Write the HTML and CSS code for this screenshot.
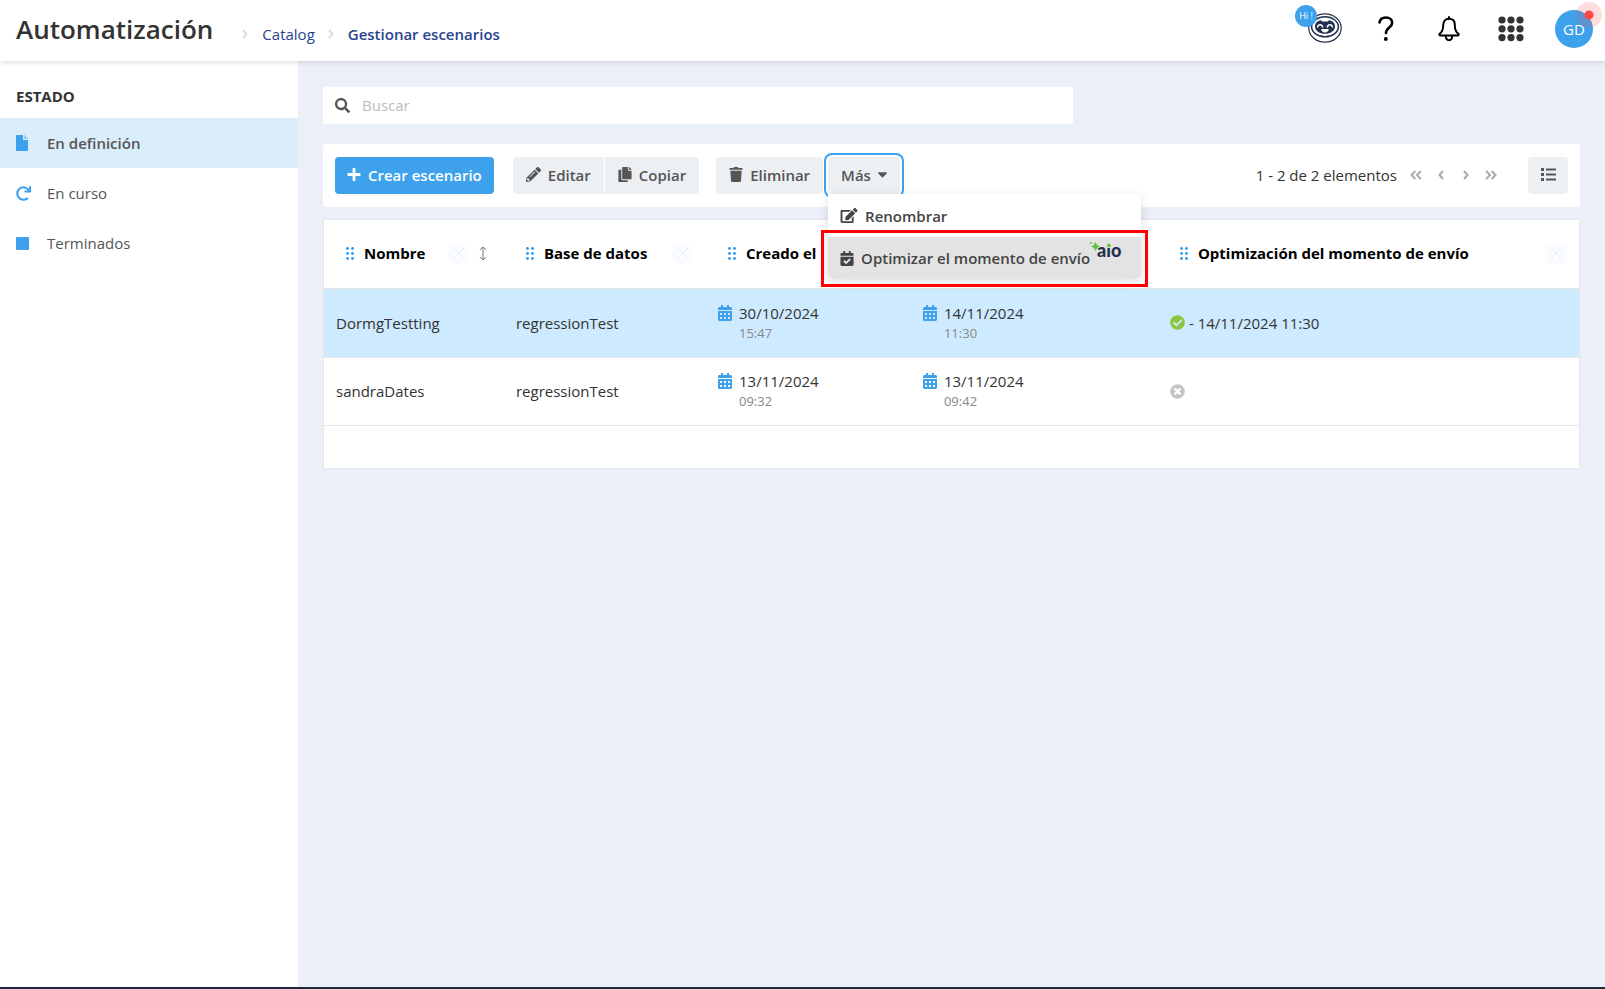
FILE: index.html
```html
<!DOCTYPE html>
<html lang="es">
<head>
<meta charset="utf-8">
<meta name="viewport" content="width=device-width, initial-scale=1">
<title>Automatización</title>
<link rel="stylesheet" href="styles.css">
</head>
<body>
<svg class="sprite" aria-hidden="true">
  <symbol id="i-file" viewBox="0 0 384 512"><path d="M224 136V0H24C10.700 0 0 10.700 0 24v464c0 13.300 10.700 24 24 24h336c13.300 0 24-10.700 24-24V160H248c-13.200 0-24-10.800-24-24z"/><path opacity=".45" d="M384 122v6H256V0h6c6.400 0 12.500 2.500 17 7l98 98c4.500 4.500 7 10.600 7 17z"/></symbol>
  <symbol id="i-redo" viewBox="0 0 512 512"><path d="M500 8h-47c-7 0-12.300 5.600-12 12.500l4 82.800A247 247 0 0 0 256 8C119 8 8 119.300 8 256.200 8 393.200 119.100 504 256 504c63.900 0 122.200-24.200 166.200-63.900 5.100-4.600 5.300-12.500.5-17.400l-34-34c-4.500-4.500-11.700-4.700-16.400-.5A176 176 0 1 1 402 157.800l-101.500-4.900c-6.900-.3-12.500 5.100-12.500 12v47.100c0 6.600 5.400 12 12 12h200c6.600 0 12-5.400 12-12V20c0-6.600-5.400-12-12-12z"/></symbol>
  <symbol id="i-search" viewBox="0 0 512 512"><path d="M505 442.700 405.300 343c-4.500-4.500-10.600-7-17-7H372c27.600-35.300 44-79.700 44-128C416 93.100 322.900 0 208 0S0 93.100 0 208s93.100 208 208 208c48.300 0 92.700-16.400 128-44v16.300c0 6.400 2.500 12.500 7 17l99.700 99.700c9.400 9.400 24.600 9.400 33.900 0l28.300-28.300c9.400-9.400 9.400-24.600.1-34zM208 336a128 128 0 1 1 0-256 128 128 0 0 1 0 256z"/></symbol>
  <symbol id="i-plus" viewBox="0 0 448 512"><path d="M416 208H272V64c0-17.700-14.300-32-32-32h-32c-17.700 0-32 14.300-32 32v144H32c-17.700 0-32 14.300-32 32v32c0 17.700 14.300 32 32 32h144v144c0 17.700 14.300 32 32 32h32c17.700 0 32-14.300 32-32V304h144c17.700 0 32-14.300 32-32v-32c0-17.700-14.300-32-32-32z"/></symbol>
  <symbol id="i-pencil" viewBox="0 0 512 512"><path d="M498 142l-46.600 46.600c-4.700 4.700-12.300 4.700-17 0L323.500 77.500c-4.700-4.700-4.700-12.300 0-17L370 14c18.700-18.700 49.100-18.700 67.900 0l60.100 60.100c18.800 18.700 18.800 49.100 0 67.900zm-214.200-41.900L21.500 362.400.300 483.900c-2.900 16.400 11.400 30.600 27.800 27.800l121.500-21.300 262.300-262.300c4.700-4.700 4.700-12.300 0-17L300.800 100c-4.800-4.700-12.400-4.700-17 .1zM124.100 339.900c-5.500-5.500-5.500-14.300 0-19.800l154-154c5.500-5.500 14.300-5.500 19.800 0s5.500 14.300 0 19.800l-154 154c-5.500 5.500-14.300 5.500-19.800 0zM88 424h48v36.300l-64.500 11.300-31.100-31.100L51.700 376H88v48z"/></symbol>
  <symbol id="i-copy" viewBox="0 0 448 512"><path d="M320 448v40c0 13.300-10.700 24-24 24H24c-13.300 0-24-10.700-24-24V120c0-13.300 10.700-24 24-24h72v296c0 30.900 25.100 56 56 56h168zm0-344V0H152c-13.300 0-24 10.700-24 24v368c0 13.300 10.700 24 24 24h272c13.300 0 24-10.700 24-24V128H344c-13.200 0-24-10.800-24-24zm121-31L375 7c-4.500-4.500-10.600-7-17-7h-6v96h96v-6c0-6.400-2.500-12.500-7-17z"/></symbol>
  <symbol id="i-trash" viewBox="0 0 448 512"><path d="M432 32H312l-9.400-18.700A24 24 0 0 0 281.100 0H166.800a23.700 23.700 0 0 0-21.400 13.300L136 32H16A16 16 0 0 0 0 48v32a16 16 0 0 0 16 16h416a16 16 0 0 0 16-16V48a16 16 0 0 0-16-16zM53.200 467a48 48 0 0 0 47.900 45h245.800a48 48 0 0 0 47.900-45L416 128H32z"/></symbol>
  <symbol id="i-caret" viewBox="0 0 10 6"><path d="M.8 0h8.400c.7 0 1 .8.500 1.300L5.600 5.500c-.3.300-.9.300-1.200 0L.3 1.300C-.2.800.100 0 .8 0z"/></symbol>
  <symbol id="i-edit" viewBox="0 0 576 512"><path d="M402.600 83.200l90.200 90.200c3.800 3.800 3.800 10 0 13.800L274.400 405.600l-92.800 10.300c-12.400 1.400-22.900-9.100-21.500-21.500l10.300-92.800L388.800 83.200c3.800-3.800 10-3.800 13.800 0zm162-22.900l-48.800-48.800c-15.200-15.200-39.900-15.200-55.200 0l-35.400 35.400c-3.800 3.800-3.800 10 0 13.800l90.200 90.200c3.800 3.800 10 3.800 13.800 0l35.400-35.400c15.200-15.300 15.200-40 0-55.200zM384 346.200V448H64V128h229.800c3.200 0 6.200-1.300 8.500-3.500l40-40c7.600-7.600 2.200-20.500-8.500-20.500H48C21.500 64 0 85.500 0 112v352c0 26.500 21.500 48 48 48h352c26.500 0 48-21.500 48-48V306.200c0-10.700-12.900-16-20.500-8.500l-40 40c-2.200 2.300-3.500 5.300-3.500 8.500z"/></symbol>
  <symbol id="i-calcheck" viewBox="0 0 448 512"><path d="M436 160H12c-6.600 0-12-5.400-12-12v-36c0-26.500 21.500-48 48-48h48V12c0-6.600 5.400-12 12-12h40c6.600 0 12 5.400 12 12v52h128V12c0-6.600 5.400-12 12-12h40c6.600 0 12 5.400 12 12v52h48c26.500 0 48 21.500 48 48v36c0 6.600-5.400 12-12 12zM12 192h424c6.600 0 12 5.400 12 12v260c0 26.500-21.500 48-48 48H48c-26.500 0-48-21.500-48-48V204c0-6.600 5.400-12 12-12zm333.300 95.900l-28.200-28.400c-4.700-4.700-12.300-4.700-17 0L194.100 364.700l-46-46.400c-4.700-4.700-12.300-4.700-17-.1l-28.400 28.200c-4.700 4.700-4.700 12.300 0 17l82.600 83.300c4.700 4.700 12.300 4.700 17 .1l143-141.800c4.700-4.800 4.700-12.400 0-17.100z"/></symbol>
  <symbol id="i-calendar" viewBox="0 0 14 16"><path d="M3 0h2v2h4V0h2v2h1.500C13.300 2 14 2.700 14 3.500V5H0V3.500C0 2.700.7 2 1.500 2H3z"/><path fill-rule="evenodd" d="M0 6h14v8.500c0 .8-.7 1.500-1.500 1.500h-11C.7 16 0 15.300 0 14.500zM2 8v2h2V8zm4 0v2h2V8zm4 0v2h2V8zM2 12v2h2v-2zm4 0v2h2v-2zm4 0v2h2v-2z"/></symbol>
  <symbol id="i-list" viewBox="0 0 15 13"><path d="M0 0h3v3H0zM0 5h3v3H0zM0 10h3v3H0zM5 .5h10v2H5zM5 5.500h10v2H5zM5 10.500h10v2H5z"/></symbol>
  <symbol id="i-left" viewBox="0 0 6 10"><path class="line" d="M5 1 1.500 5 5 9"/></symbol>
  <symbol id="i-right" viewBox="0 0 6 10"><path class="line" d="M1 1l3.500 4L1 9"/></symbol>
  <symbol id="i-dleft" viewBox="0 0 12 10"><path class="line" d="M5.300 1 1.500 5l3.800 4M10.800 1 7 5l3.800 4"/></symbol>
  <symbol id="i-dright" viewBox="0 0 12 10"><path class="line" d="M1.200 1 5 5 1.200 9M6.700 1l3.800 4-3.800 4"/></symbol>
  <symbol id="i-grip" viewBox="0 0 8 13"><circle cx="1.500" cy="1.500" r="1.400"/><circle cx="6.500" cy="1.500" r="1.400"/><circle cx="1.500" cy="6.500" r="1.400"/><circle cx="6.500" cy="6.500" r="1.400"/><circle cx="1.500" cy="11.500" r="1.400"/><circle cx="6.500" cy="11.500" r="1.400"/></symbol>
  <symbol id="i-x" viewBox="0 0 12 12"><path d="M1 1l10 10M11 1 1 11"/></symbol>
  <symbol id="i-sort" viewBox="0 0 8 15"><path class="thin" d="M4 1v13M.8 4 4 1l3.200 3M.8 11 4 14l3.200-3"/></symbol>
  <symbol id="i-ok" viewBox="0 0 512 512"><path d="M504 256a248 248 0 1 1-496 0 248 248 0 0 1 496 0zM227.300 387.300l184-184c6.200-6.200 6.200-16.400 0-22.600l-22.600-22.600c-6.200-6.200-16.400-6.200-22.600 0L216 308.100l-70.100-70.100c-6.200-6.200-16.400-6.200-22.600 0l-22.600 22.600c-6.200 6.200-6.200 16.400 0 22.600l104 104c6.200 6.300 16.400 6.300 22.600.1z"/></symbol>
  <symbol id="i-no" viewBox="0 0 512 512"><path d="M256 8a248 248 0 1 0 0 496 248 248 0 0 0 0-496zm121.600 313.100c4.700 4.700 4.700 12.300 0 17L338 377.600c-4.700 4.700-12.300 4.700-17 0L256 312l-65.100 65.600c-4.700 4.700-12.300 4.700-17 0L134.400 338c-4.700-4.700-4.700-12.300 0-17l65.600-65-65.600-65.100c-4.700-4.700-4.700-12.300 0-17l39.600-39.600c4.700-4.700 12.300-4.700 17 0l65 65.700 65.100-65.600c4.700-4.700 12.300-4.700 17 0l39.600 39.600c4.700 4.700 4.700 12.300 0 17L312 256z"/></symbol>
</svg>

<header class="topbar">
  <h1 class="topbar-title">Automatización</h1>
  <nav class="crumbs" aria-label="Ruta">
    <svg class="ic chev" aria-hidden="true"><use href="#i-right"/></svg>
    <a href="#catalog">Catalog</a>
    <svg class="ic chev" aria-hidden="true"><use href="#i-right"/></svg>
    <a href="#escenarios" class="current">Gestionar escenarios</a>
  </nav>
  <div class="tools">
    <button type="button" class="tool robot" aria-label="Asistente">
      <svg width="34" height="30" viewBox="0 0 34 30" fill="none">
        <ellipse cx="17" cy="15" rx="16.200" ry="14.200" stroke="#22304f" stroke-width="1.200"/>
        <ellipse cx="17" cy="13.800" rx="13.400" ry="10" stroke="#22304f" stroke-width="1.500"/>
        <path d="M7 13.500c0-3.500 2.500-5.700 6-6.200l1.200 1.300h5.600L21 7.300c3.500.5 6 2.700 6 6.200 0 4.500-4.700 7.300-10 7.300s-10-2.800-10-7.300z" fill="#22304f"/>
        <path d="M9.500 14.500c.3-3.800 4.900-3.800 5.200 0M19.300 14.500c.3-3.800 4.900-3.800 5.200 0" stroke="#fff" stroke-width="1.500"/>
        <path d="M13.200 16h7.600c0 4.600-7.600 4.600-7.600 0z" fill="#fff"/>
      </svg>
      <span class="hi">Hi !</span>
    </button>
    <button type="button" class="tool help" aria-label="Ayuda">
      <svg width="16" height="26" viewBox="0 0 16 26"><path d="M1.500 6.500C2 3 4.500 1.500 8 1.500c3.700 0 6.200 2 6.200 5.200 0 4.800-6.200 4.800-6.200 10.300" fill="none" stroke="#000" stroke-width="2.600" stroke-linecap="round"/><circle cx="7.800" cy="23" r="2"/></svg>
    </button>
    <button type="button" class="tool" aria-label="Notificaciones">
      <svg width="22" height="26" viewBox="0 0 22 26" fill="none" stroke="#000" stroke-width="2" stroke-linejoin="round"><path d="M11 2.800c3.800 0 5.800 2.600 5.800 6.200 0 5.200 1.200 7.200 3.600 8.800.6.500.4 1.600-.5 1.600H2.100c-.9 0-1.100-1.100-.5-1.600C4 16.200 5.200 14.200 5.200 9c0-3.600 2-6.200 5.800-6.200z"/><path d="M11 2.800V1M7.800 20c0 5.500 6.400 5.500 6.400 0" stroke-linecap="round"/></svg>
    </button>
    <button type="button" class="tool" aria-label="Aplicaciones">
      <svg width="26" height="26" viewBox="0 0 26 26" fill="#333"><circle cx="4" cy="4" r="3.600"/><circle cx="13" cy="4" r="3.600"/><circle cx="22" cy="4" r="3.600"/><circle cx="4" cy="12.800" r="3.600"/><circle cx="13" cy="12.800" r="3.600"/><circle cx="22" cy="12.800" r="3.600"/><circle cx="4" cy="21.600" r="3.600"/><circle cx="13" cy="21.600" r="3.600"/><circle cx="22" cy="21.600" r="3.600"/></svg>
    </button>
    <button type="button" class="avatar">GD<span class="pulse"></span></button>
  </div>
</header>

<div class="layout">
  <aside class="sidebar">
    <h2 class="sidebar-title">Estado</h2>
    <nav aria-label="Estado">
      <a class="side-item active" href="#definicion"><svg class="ic side-file" aria-hidden="true"><use href="#i-file"/></svg>En definición</a>
      <a class="side-item" href="#curso"><svg class="ic side-redo" aria-hidden="true"><use href="#i-redo"/></svg>En curso</a>
      <a class="side-item" href="#terminados"><span class="side-stop"></span>Terminados</a>
    </nav>
  </aside>

  <main class="main">
    <label class="search">
      <svg class="ic i15" aria-hidden="true"><use href="#i-search"/></svg>
      <input type="search" placeholder="Buscar" aria-label="Buscar">
    </label>

    <div class="toolbar">
      <button type="button" class="btn primary"><svg class="ic i14" aria-hidden="true"><use href="#i-plus"/></svg>Crear escenario</button>
      <div class="group joined">
        <button type="button" class="btn"><svg class="ic i15" aria-hidden="true"><use href="#i-pencil"/></svg>Editar</button>
        <button type="button" class="btn"><svg class="ic i14" aria-hidden="true"><use href="#i-copy"/></svg>Copiar</button>
      </div>
      <div class="group">
        <button type="button" class="btn"><svg class="ic i14" aria-hidden="true"><use href="#i-trash"/></svg>Eliminar</button>
        <div class="dropdown">
          <button type="button" class="btn focused" aria-haspopup="true" aria-expanded="true">Más<svg class="ic caret" aria-hidden="true"><use href="#i-caret"/></svg></button>
          <div class="menu" role="menu">
            <button type="button" class="menu-item" role="menuitem"><svg class="ic i17" aria-hidden="true"><use href="#i-edit"/></svg>Renombrar</button>
            <button type="button" class="menu-item hover" role="menuitem"><svg class="ic i14" aria-hidden="true"><use href="#i-calcheck"/></svg><span>Optimizar el momento de envío</span>
              <svg class="aio" width="32" height="18" viewBox="0 0 32 18" aria-label="aio">
                <text x="7" y="14">aio</text>
                <circle cx="19" cy="2.500" r="2.600" fill="#e3e3e3"/><circle cx="19" cy="2.600" r="1.800" fill="#5cc43c"/>
                <path fill="#5cc43c" d="M5.500-1.500c1.200 3.500 1.500 4 5 5-3.500 1-3.800 1.500-5 5-1.200-3.500-1.500-4-5-5 3.500-1 3.800-1.500 5-5z"/><circle cx="1" cy="0" r="1" fill="#5cc43c"/>
              </svg>
            </button>
            <div class="marker"></div>
          </div>
        </div>
      </div>
      <div class="pager">
        <span>1 - 2 de 2 elementos</span>
        <button type="button" aria-label="Primera página"><svg class="ic double" aria-hidden="true"><use href="#i-dleft"/></svg></button>
        <button type="button" aria-label="Página anterior"><svg class="ic single" aria-hidden="true"><use href="#i-left"/></svg></button>
        <button type="button" aria-label="Página siguiente"><svg class="ic single" aria-hidden="true"><use href="#i-right"/></svg></button>
        <button type="button" aria-label="Última página"><svg class="ic double" aria-hidden="true"><use href="#i-dright"/></svg></button>
      </div>
      <button type="button" class="btn view" aria-label="Vista de lista"><svg class="ic list" aria-hidden="true"><use href="#i-list"/></svg></button>
    </div>

    <div class="table-box">
      <table>
        <colgroup><col class="c1"><col class="c2"><col class="c3"><col class="c4"><col class="c5"></colgroup>
        <thead>
          <tr>
            <th><div class="head"><svg class="ic grip" aria-hidden="true"><use href="#i-grip"/></svg>Nombre<button type="button" class="clear" aria-label="Quitar Nombre"><svg class="ic x" aria-hidden="true"><use href="#i-x"/></svg></button><svg class="ic sort" aria-hidden="true"><use href="#i-sort"/></svg></div></th>
            <th><div class="head"><svg class="ic grip" aria-hidden="true"><use href="#i-grip"/></svg>Base de datos<button type="button" class="clear" aria-label="Quitar Base de datos"><svg class="ic x" aria-hidden="true"><use href="#i-x"/></svg></button></div></th>
            <th><div class="head"><svg class="ic grip" aria-hidden="true"><use href="#i-grip"/></svg>Creado el</div></th>
            <th></th>
            <th><div class="head"><svg class="ic grip" aria-hidden="true"><use href="#i-grip"/></svg>Optimización del momento de envío<button type="button" class="clear" aria-label="Quitar Optimización"><svg class="ic x" aria-hidden="true"><use href="#i-x"/></svg></button></div></th>
          </tr>
        </thead>
        <tbody>
          <tr class="selected">
            <td>DormgTestting</td>
            <td>regressionTest</td>
            <td><div class="date"><svg class="ic cal" aria-hidden="true"><use href="#i-calendar"/></svg><div>30/10/2024<small>15:47</small></div></div></td>
            <td><div class="date"><svg class="ic cal" aria-hidden="true"><use href="#i-calendar"/></svg><div>14/11/2024<small>11:30</small></div></div></td>
            <td><div class="status"><svg class="ic i15 ok" aria-hidden="true"><use href="#i-ok"/></svg>- 14/11/2024 11:30</div></td>
          </tr>
          <tr>
            <td>sandraDates</td>
            <td>regressionTest</td>
            <td><div class="date"><svg class="ic cal" aria-hidden="true"><use href="#i-calendar"/></svg><div>13/11/2024<small>09:32</small></div></div></td>
            <td><div class="date"><svg class="ic cal" aria-hidden="true"><use href="#i-calendar"/></svg><div>13/11/2024<small>09:42</small></div></div></td>
            <td><div class="status"><svg class="ic i15 no" aria-hidden="true"><use href="#i-no"/></svg></div></td>
          </tr>
        </tbody>
      </table>
      <div class="table-foot"></div>
    </div>
  </main>
</div>
</body>
</html>
```
FILE: styles.css
```css
* { box-sizing: border-box; }
body {
  margin: 0;
  min-height: 100vh;
  display: flex;
  flex-direction: column;
  border-bottom: 2px solid #1c2940;
  background: #ebeff7;
  color: #333;
  font: 15px/20px "Open Sans", "Noto Sans", sans-serif;
}
button, input { font: inherit; color: inherit; border: 0; background: none; padding: 0; margin: 0; }
a { color: inherit; text-decoration: none; }
.sprite { display: none; }
.ic { display: block; flex: none; fill: currentColor; }
.line { fill: none; stroke: currentColor; stroke-width: 2; }
.thin { fill: none; stroke: currentColor; stroke-width: 1; }
.i14 { width: 14px; height: 15px; }
.i15 { width: 15px; height: 15px; }
.i17 { width: 18px; height: 15px; }

/* Top bar */
.topbar {
  position: relative;
  z-index: 2;
  display: flex;
  align-items: center;
  height: 61px;
  padding: 0 12px 3px 16px;
  background: #fff;
  box-shadow: 0 1px 6px rgba(0, 0, 0, .15);
}
.topbar-title { margin: 0; font-size: 26px; line-height: 36px; font-weight: 600; }
.crumbs { display: flex; align-items: center; padding: 9px 0 0 29px; color: #2a4390; }
.crumbs .current { font-weight: 600; }
.chev { width: 6px; height: 10px; margin-right: 14px; color: #ddd; }
.crumbs a + .chev { margin-left: 13px; }
.tools { display: flex; align-items: center; gap: 38px; margin-left: auto; }
.tool { position: relative; display: flex; cursor: pointer; }
.help { margin: 0 6px 0 -2px; }
.robot { margin-top: -2px; }
.hi {
  position: absolute;
  left: -13px;
  top: -8px;
  width: 22px;
  height: 22px;
  border-radius: 50%;
  background: #3ea1ec;
  color: #fff;
  font-size: 9px;
  line-height: 22px;
  text-align: center;
}
.avatar {
  position: relative;
  width: 38px;
  height: 38px;
  margin-left: -7px;
  border-radius: 50%;
  background: #3ea1ec;
  color: #fff;
}
.pulse {
  position: absolute;
  right: -9px;
  top: -8px;
  width: 26px;
  height: 26px;
  border-radius: 50%;
  background: radial-gradient(circle, #ff4545 0 4px, rgba(255, 69, 69, .18) 5px);
}

/* Layout */
.layout { flex: 1; display: flex; }
.sidebar { flex: none; width: 298px; background: #fff; }
.sidebar-title { margin: 0; padding: 25px 16px 12px; font-size: 15px; line-height: 20px; font-weight: 700; text-transform: uppercase; }
.side-item { display: flex; align-items: center; height: 50px; padding-left: 16px; color: #555; }
.side-item.active { background: #daedfb; font-weight: 600; }
.side-item .ic { color: #3ea1ec; }
.side-file { width: 12px; height: 16px; margin-right: 19px; }
.side-redo { width: 15px; height: 15px; margin-right: 16px; }
.side-stop { width: 13px; height: 13px; margin-right: 18px; border-radius: 1px; background: #3ea1ec; }
.main { flex: 1; min-width: 0; padding: 26px 25px; }

.search {
  display: flex;
  align-items: center;
  gap: 12px;
  max-width: 750px;
  height: 37px;
  padding: 0 12px;
  border-radius: 3px;
  background: #fff;
  color: #555;
}
.search input { flex: 1; padding-bottom: 2px; outline: none; appearance: none; }
.search input::placeholder { color: #bbb; opacity: 1; }

/* Toolbar */
.toolbar {
  display: flex;
  align-items: center;
  margin: 20px 0 12px;
  padding: 13px 12px;
  border-radius: 3px;
  background: #fff;
}
.btn {
  display: flex;
  align-items: center;
  gap: 7px;
  height: 37px;
  padding: 0 13px 2px;
  border-radius: 4px;
  background: #ecf0f3;
  color: #555;
  font-weight: 600;
  cursor: pointer;
}
.btn.primary { padding: 0 12px 2px; background: #3ea1ec; color: #fff; }
.group { display: flex; gap: 5px; margin-left: 17px; }
.joined { gap: 1px; margin-left: 19px; }
.joined .btn:first-child { border-radius: 4px 0 0 4px; }
.joined .btn:last-child { border-radius: 0 4px 4px 0; }
.dropdown { position: relative; }
.focused { outline: 2px solid #3ea1ec; outline-offset: 2px; }
.caret { width: 9px; height: 6px; }
.menu {
  position: absolute;
  z-index: 1;
  top: 100%;
  left: 0;
  width: 313px;
  border-radius: 0 6px 6px 6px;
  background: #fff;
  box-shadow: 0 3px 12px rgba(0, 0, 0, .13);
}
.menu-item {
  display: flex;
  align-items: center;
  gap: 7px;
  width: 100%;
  height: 43px;
  padding: 0 12px;
  color: #444;
  font-weight: 600;
  cursor: pointer;
}
.menu-item.hover { height: 42px; background: #e3e3e3; border-radius: 0 0 6px 6px; }
.aio { margin: 0 0 12px -7px; font: 900 18px Lato, sans-serif; fill: #22304f; overflow: visible; }
.marker { position: absolute; inset: 36px -7px -8px; border: 3px solid #f00; }
.pager { display: flex; align-items: center; margin-left: auto; padding-bottom: 1px; }
.pager button { display: flex; justify-content: center; width: 25px; color: #aaa; cursor: pointer; }
.pager span { margin-right: 6px; }
.single { width: 6px; height: 10px; }
.double { width: 12px; height: 10px; }
.view { margin-left: 25px; width: 40px; justify-content: center; }
.list { width: 15px; height: 13px; }

/* Table */
.table-box { border: 1px solid #e4e6e8; background: #fff; }
table { width: 100%; border-collapse: collapse; table-layout: fixed; }
.c1 { width: 14.340%; }
.c2 { width: 16.100%; }
.c3 { width: 16.330%; }
.c4 { width: 19.680%; }
th, td { padding: 0 12px; text-align: left; border-bottom: 1px solid #e4e6e8; }
th { height: 68px; padding: 0 12px 1px 22px; color: #000; font-weight: 700; white-space: nowrap; }
td { height: 68px; }
.selected td { height: 69px; }
.selected { background: #ceeaff; }
.head { display: flex; align-items: center; }
.grip { width: 8px; height: 13px; margin-right: 10px; color: #2f9af0; }
.clear { display: flex; margin-left: auto; padding: 5px; border-radius: 4px; background: #fafcff; stroke: #dcedfa; cursor: pointer; }
.x { width: 12px; height: 12px; }
.sort { width: 8px; height: 15px; margin: 0 5px 0 9px; color: #777; }
.date { display: flex; gap: 7px; }
.date small { display: block; color: #888; font-size: 13px; line-height: 20px; }
.cal { width: 14px; height: 16px; margin-top: 2px; color: #3ea1ec; }
.status { display: flex; align-items: center; gap: 4px; }
.ok { color: #8cc63f; }
.no { color: #c4c4c4; }
.table-foot { height: 42px; }
```
